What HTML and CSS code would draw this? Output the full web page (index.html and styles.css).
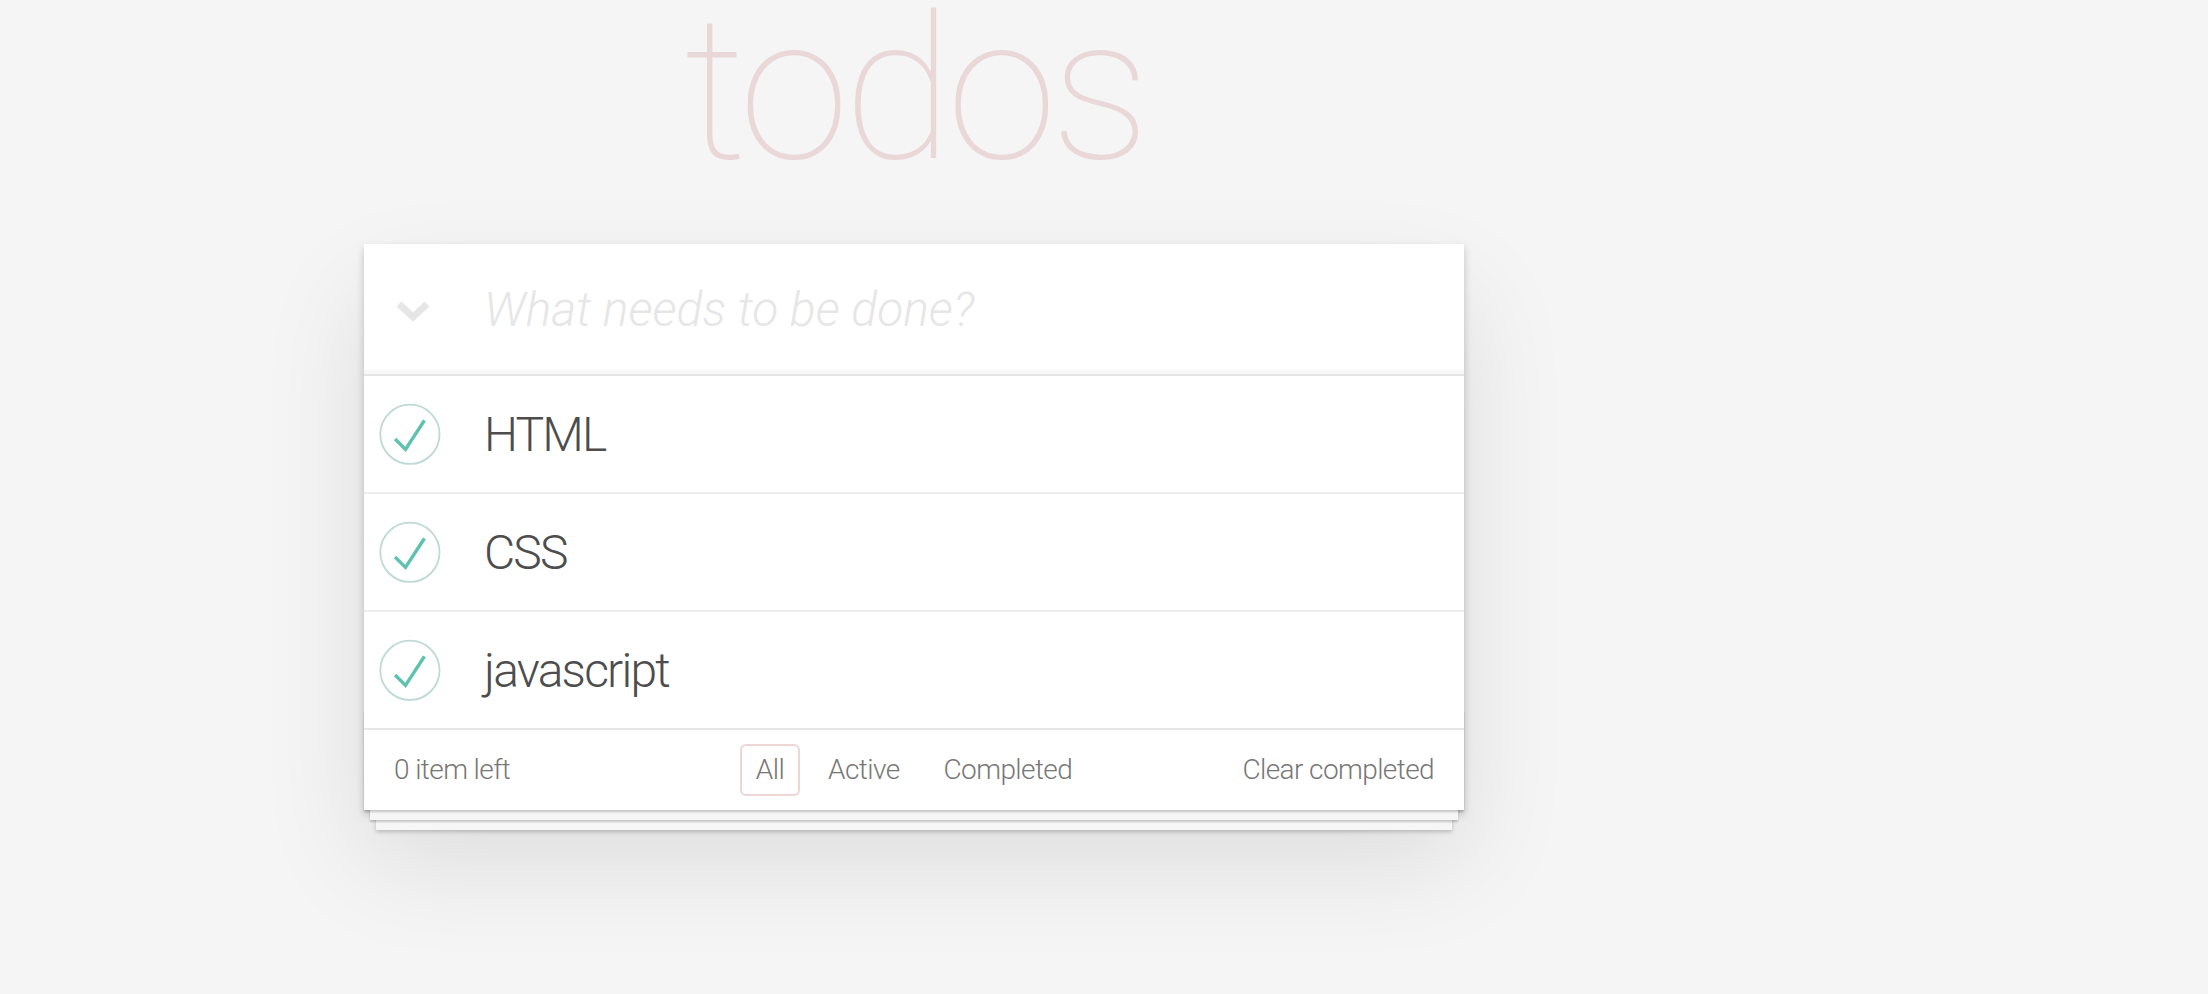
FILE: index.html
```html
<!DOCTYPE html>
<html lang="en">
<head>
<meta charset="utf-8">
<title>todos</title>
<link rel="stylesheet" href="styles.css">
</head>
<body>
<section class="todoapp">
  <h1 class="title">todos</h1>
  <div class="card">
    <header class="entry">
      <span class="toggle-all">
        <svg width="36" height="24" viewBox="0 0 36 24"><polyline points="4,4 18,17 32,4" fill="none" stroke="#e6e6e6" stroke-width="7" stroke-linejoin="miter"/></svg>
      </span>
      <input class="new-todo" type="text" placeholder="What needs to be done?">
    </header>
    <ul class="todo-list">
      <li class="todo">
        <svg class="check" width="80" height="80" viewBox="-10 -18 100 135"><circle cx="50" cy="50" r="50" fill="none" stroke="#bddad5" stroke-width="3"/><path fill="#5dc2af" d="M72 25L42 71 27 56l-4 4 20 20 34-52z"/></svg>
        <span class="label">HTML</span>
      </li>
      <li class="todo">
        <svg class="check" width="80" height="80" viewBox="-10 -18 100 135"><circle cx="50" cy="50" r="50" fill="none" stroke="#bddad5" stroke-width="3"/><path fill="#5dc2af" d="M72 25L42 71 27 56l-4 4 20 20 34-52z"/></svg>
        <span class="label">CSS</span>
      </li>
      <li class="todo">
        <svg class="check" width="80" height="80" viewBox="-10 -18 100 135"><circle cx="50" cy="50" r="50" fill="none" stroke="#bddad5" stroke-width="3"/><path fill="#5dc2af" d="M72 25L42 71 27 56l-4 4 20 20 34-52z"/></svg>
        <span class="label">javascript</span>
      </li>
    </ul>
    <footer class="footer">
      <span class="count">0 item left</span>
      <ul class="filters">
        <li><a class="selected">All</a></li>
        <li><a>Active</a></li>
        <li><a>Completed</a></li>
      </ul>
      <span class="clear">Clear completed</span>
    </footer>
  </div>
</section>
</body>
</html>
```
FILE: styles.css
```css
html, body {
  margin: 0;
  padding: 0;
}
body {
  background: #f5f5f5;
  font-family: Roboto, "Helvetica Neue", Arial, sans-serif;
  font-weight: 300;
  color: #4d4d4d;
  height: 994px;
  overflow: hidden;
}
.todoapp {
  width: 1100px;
  margin-left: 364px;
  padding-top: 10px;
}
.title {
  margin: 0;
  height: 160px;
  font-size: 200px;
  line-height: 160px;
  font-weight: 100;
  letter-spacing: -6px;
  text-align: center;
  color: rgba(175, 47, 47, 0.15);
}
.card {
  position: relative;
  margin-top: 74px;
  background: #fff;
  box-shadow: 0 4px 8px 0 rgba(0, 0, 0, 0.2), 0 50px 100px 0 rgba(0, 0, 0, 0.1);
}
.entry {
  display: flex;
  align-items: center;
  height: 130px;
  box-shadow: inset 0 -4px 2px rgba(0, 0, 0, 0.03);
  border-bottom: 2px solid #e6e6e6;
}
.toggle-all {
  width: 120px;
  flex: none;
  display: flex;
  align-items: center;
  padding-left: 31px;
  box-sizing: border-box;
  padding-top: 6px;
}
.toggle-all svg {
  display: block;
}
.new-todo {
  flex: 1;
  height: 130px;
  border: 0;
  outline: none;
  background: transparent;
  padding: 0 32px 0 0;
  font-family: inherit;
  font-size: 48px;
  font-weight: 300;
  color: #4d4d4d;
}
.new-todo::placeholder {
  font-style: italic;
  font-weight: 300;
  color: #e6e6e6;
}
.todo-list {
  list-style: none;
  margin: 0;
  padding: 0;
}
.todo {
  display: flex;
  align-items: center;
  height: 116px;
  border-bottom: 2px solid #ededed;
  font-size: 48px;
}
.todo:last-child {
  border-bottom: none;
}
.check {
  flex: none;
  display: block;
}
.label {
  margin-left: 40px;
  line-height: 56px;
  padding-top: 2px;
  letter-spacing: -1.8px;
}
.footer {
  position: relative;
  display: grid;
  grid-template-columns: 1fr auto 1fr;
  align-items: center;
  height: 80px;
  padding: 0 30px;
  border-top: 2px solid #e6e6e6;
  color: #777;
  font-size: 28px;
  line-height: 40px;
  letter-spacing: -0.6px;
}
.footer::before {
  content: "";
  position: absolute;
  left: 0;
  right: 0;
  bottom: 0;
  height: 100px;
  overflow: hidden;
  pointer-events: none;
  box-shadow: 0 2px 2px rgba(0, 0, 0, 0.2),
    0 16px 0 -6px #f6f6f6,
    0 18px 2px -6px rgba(0, 0, 0, 0.2),
    0 32px 0 -12px #f6f6f6,
    0 34px 4px -12px rgba(0, 0, 0, 0.2);
}
.count {
  justify-self: start;
}
.clear {
  justify-self: end;
}
.filters {
  list-style: none;
  margin: 0;
  padding: 0;
  display: flex;
}
.filters a {
  display: block;
  margin: 6px;
  padding: 4px 14px;
  border: 2px solid transparent;
  border-radius: 6px;
  color: inherit;
}
.filters a.selected {
  border-color: rgba(175, 47, 47, 0.2);
}
```
